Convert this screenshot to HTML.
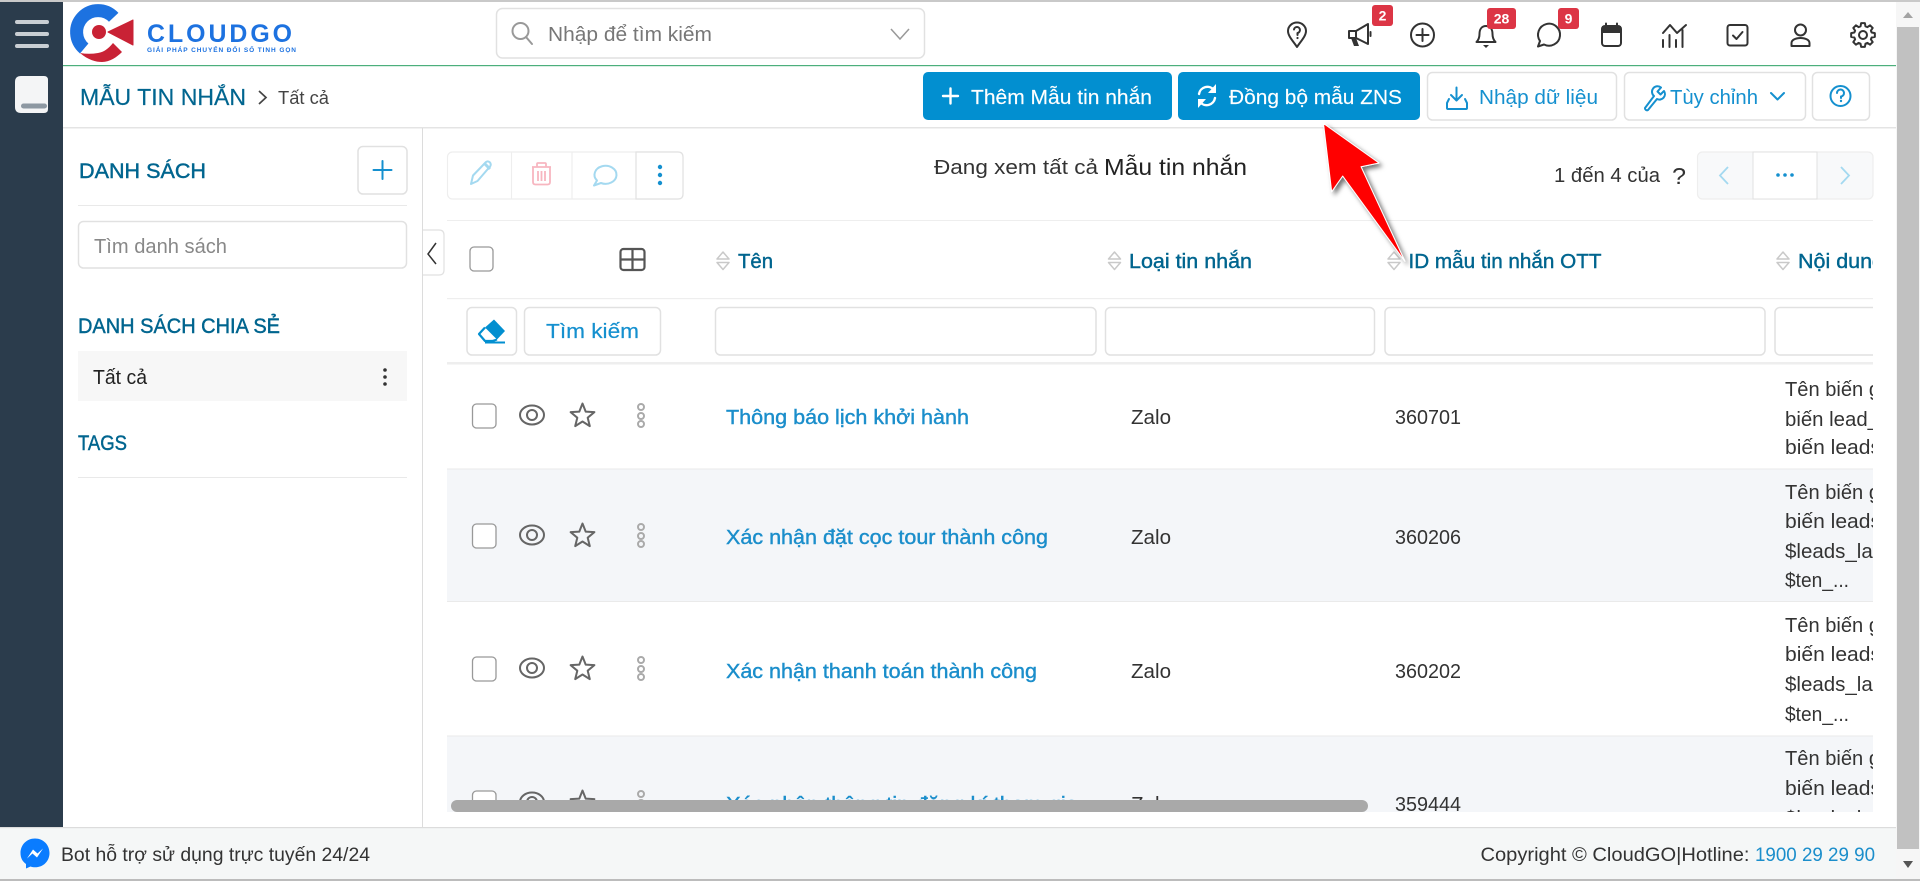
<!DOCTYPE html>
<html lang="vi"><head><meta charset="utf-8"><title>Mẫu tin nhắn</title>
<style>
html,body{margin:0;padding:0;background:#fff;overflow:hidden;width:1920px;height:881px}
svg{display:block}
text{font-family:"Liberation Sans","Noto Sans CJK SC",sans-serif;font-size:20px;fill:#333;white-space:pre}
.h{fill:#00658f;stroke:#00658f;stroke-width:.45;font-size:21px}
.th{fill:#00658f;stroke:#00658f;stroke-width:.4;font-size:20px}
.l{fill:#1b8ecb;stroke:#1b8ecb;stroke-width:.4;font-size:20px}
.b{fill:#1590cf}
.w{fill:#fff;stroke:#fff;stroke-width:.15}
.box{fill:#fff;stroke:#e1e1e1;stroke-width:1.5}
.ic{fill:none;stroke:#333;stroke-width:2;stroke-linecap:round;stroke-linejoin:round}
.bi{fill:none;stroke:#1590cf;stroke-width:2;stroke-linecap:round;stroke-linejoin:round}
.wi{fill:none;stroke:#fff;stroke-width:2.4;stroke-linecap:round;stroke-linejoin:round}
.gi{fill:none;stroke:#666;stroke-width:2;stroke-linejoin:round}
.badge{fill:#fff;font-weight:bold;font-size:14px;text-anchor:middle}
</style></head><body>
<svg width="1920" height="881" viewBox="0 0 1920 881" xmlns="http://www.w3.org/2000/svg">
<defs>
<clipPath id="tbl"><rect x="447" y="220" width="1426" height="592"/></clipPath>
<filter id="sh" x="-30%" y="-30%" width="170%" height="170%"><feDropShadow dx="3" dy="3" stdDeviation="2.5" flood-color="#000" flood-opacity=".55"/></filter>
<g id="rowic">
<rect x="472.5" y="-12" width="23.5" height="24" rx="4" fill="#fff" stroke="#999" stroke-width="1.3"/>
<ellipse cx="532" cy="-1" rx="12" ry="9.5" class="gi"/><circle cx="532" cy="-1" r="5" class="gi"/>
<polygon transform="translate(582.5,0)" class="gi" points="0,-12.5 3.2,-4.4 11.9,-3.9 5.2,1.7 7.3,10.1 0,5.5 -7.3,10.1 -5.2,1.7 -11.9,-3.9 -3.2,-4.4"/>
<g fill="none" stroke="#aaa" stroke-width="2"><circle cx="641" cy="-9" r="3"/><circle cx="641" cy="0" r="3"/><circle cx="641" cy="8" r="3"/></g>
</g>
<g id="sort" fill="none" stroke="#c9c9c9" stroke-width="1.5" stroke-linejoin="round"><path d="M-6 -2 L0 -9 L6 -2 Z"/><path d="M-6 1.5 L0 8.5 L6 1.5 Z"/></g>
</defs>

<!-- page frame -->
<rect x="0" y="0" width="1920" height="881" fill="#fff"/>
<rect x="0" y="0" width="1920" height="2" fill="#c9c9c9"/>
<rect x="0" y="2" width="63" height="825" fill="#2b3c4c"/>

<!-- scrollbar -->
<rect x="1896" y="2" width="24" height="877" fill="#f6f6f6"/>
<rect x="1897" y="27" width="22" height="822" fill="#c1c1c1"/>
<path d="M1903 18 L1908 12 L1913 18 Z" fill="#a3a3a3"/>
<path d="M1903 861 L1908 868 L1913 861 Z" fill="#555"/>

<!-- sidebar -->
<g fill="#c9ced3"><rect x="15" y="20" width="34" height="4" rx="2"/><rect x="15" y="32" width="34" height="4" rx="2"/><rect x="15" y="44" width="34" height="4" rx="2"/></g>
<path d="M21 76 H44 Q48 76 48 80 V109 Q48 113 44 113 H21 Q15 113 15 107 V82 Q15 76 21 76 Z" fill="#f4f5f6"/>
<rect x="21" y="103.500" width="26" height="5" rx="2.500" fill="#8d98a2"/>

<!-- logo -->
<path d="M113.700 17.300 A21.500 21.500 0 1 0 84.200 48.500" fill="none" stroke="#1d72e0" stroke-width="13"/>
<path d="M80 53 C88 60 96 62 102 62 C110 62 117 57 122 52 L113 43 C108 49 104 52 98 53 C92 54 86 54 80 53 Z" fill="#c92235"/>
<path d="M108 32 L133 20 V45 Z" fill="#c92235" stroke="#c92235" stroke-width="1" stroke-linejoin="round"/>
<circle cx="99" cy="32" r="7" fill="#c92235"/>
<text x="147" y="42" textLength="148" lengthAdjust="spacingAndGlyphs" style="font-weight:bold;font-size:25px;letter-spacing:3px;fill:#1d72e0">CLOUDGO</text>
<text x="147" y="52" textLength="149" style="font-weight:bold;font-size:6.500px;fill:#1d72e0">GIẢI PHÁP CHUYỂN ĐỔI SỐ TINH GỌN</text>

<!-- global search -->
<rect x="496.500" y="8.500" width="428" height="49.500" rx="6" class="box"/>
<circle cx="520.500" cy="31" r="8" fill="none" stroke="#999" stroke-width="2"/><path d="M526 37 L532 44" stroke="#999" stroke-width="2" stroke-linecap="round"/>
<text x="548" y="41" textLength="164" lengthAdjust="spacingAndGlyphs" style="fill:#777">Nhập để tìm kiếm</text>
<path d="M891 29 L900 39 L909 29" fill="none" stroke="#999" stroke-width="1.500"/>

<!-- header icons -->
<path class="ic" d="M1297 47 C1293 41 1288 36 1288 31 A9 8.500 0 0 1 1306 31 C1306 36 1301 41 1297 47 Z"/>
<path class="ic" stroke-width="1.600" d="M1294 29.500 A3 3 0 1 1 1297.500 33 V35"/><circle cx="1297.500" cy="38" r="1.100" fill="#333"/>

<path class="ic" d="M1349 31 H1356 L1368 24 V44 L1356 38 H1349 Z M1356 31 V38"/>
<path d="M1351 38 H1356 L1359 46 H1354 Z" fill="#333"/>
<path class="ic" d="M1370.500 32 V36"/>

<circle class="ic" cx="1422.500" cy="35" r="11.500"/><path class="ic" d="M1416.500 35 H1428.500 M1422.500 29 V41"/>

<path class="ic" d="M1476.500 42 C1478.500 40 1479.500 38 1479.500 34 C1479.500 29 1482 26 1486 26 C1490 26 1492.500 29 1492.500 34 C1492.500 38 1493.500 40 1495.500 42 Z"/>
<path d="M1483 45 H1489 L1486 48 Z" fill="#333"/>

<path class="ic" d="M1538 46.500 L1540 41 A11 11 0 1 1 1544 44.500 Z"/>

<rect class="ic" x="1602" y="26" width="19" height="20" rx="3"/>
<rect x="1602" y="26" width="19" height="7" fill="#333"/>
<path class="ic" d="M1606 23.500 V27 M1617 23.500 V27"/>

<path class="ic" d="M1663 40 V47 M1669.500 35 V47 M1676 40 V47 M1682.500 30 V47" stroke-width="1.800"/>
<path class="ic" d="M1663 33 L1670 25 L1677 33 L1686 25" stroke-width="1.800"/>

<rect class="ic" x="1727.500" y="25" width="20" height="20.500" rx="2.500"/>
<path class="ic" d="M1733 35.500 L1736.500 39 L1742.500 32" stroke-width="1.800"/>

<circle class="ic" cx="1800.500" cy="30" r="5.500"/>
<path class="ic" d="M1791.500 46 V43 C1791.500 40 1795.500 38 1800.500 38 C1805.500 38 1809.500 40 1809.500 43 V46 Z"/>

<g transform="translate(1863,35)"><polygon class="ic" points="8.65,-2.48 11.85,-1.88 11.85,1.88 8.65,2.48 7.87,4.36 9.71,7.05 7.05,9.71 4.36,7.87 2.48,8.65 1.88,11.85 -1.88,11.85 -2.48,8.65 -4.36,7.87 -7.05,9.71 -9.71,7.05 -7.87,4.36 -8.65,2.48 -11.85,1.88 -11.85,-1.88 -8.65,-2.48 -7.87,-4.36 -9.71,-7.05 -7.05,-9.71 -4.36,-7.87 -2.48,-8.65 -1.88,-11.85 1.88,-11.85 2.48,-8.65 4.36,-7.87 7.05,-9.71 9.71,-7.05 7.87,-4.36"/><circle class="ic" r="4"/></g>

<rect x="1372" y="5" width="21" height="21" rx="3" fill="#dc3545"/><text class="badge" x="1382.500" y="20.500">2</text>
<rect x="1487" y="8" width="29" height="21" rx="3" fill="#dc3545"/><text class="badge" x="1501.500" y="23.500">28</text>
<rect x="1558" y="8" width="21" height="21" rx="3" fill="#dc3545"/><text class="badge" x="1568.500" y="23.500">9</text>

<rect x="63" y="65" width="1833" height="1.200" fill="#4caf7c"/>

<!-- breadcrumb bar -->
<text x="80" y="105" textLength="166" lengthAdjust="spacingAndGlyphs" style="font-size:23px;fill:#00658f;stroke:#00658f;stroke-width:.2">MẪU TIN NHẮN</text>
<path d="M259 91 L266 97.500 L259 104" fill="none" stroke="#444" stroke-width="1.700"/>
<text x="278" y="104" textLength="51" lengthAdjust="spacingAndGlyphs" style="font-size:18px;fill:#444">Tất cả</text>

<rect x="923" y="72" width="249" height="48" rx="5" fill="#028fd0"/>
<path class="wi" d="M943 96 H958 M950.500 88.500 V103.500"/>
<text class="w" x="971" y="104" textLength="181" lengthAdjust="spacingAndGlyphs">Thêm Mẫu tin nhắn</text>

<rect x="1178" y="72" width="242" height="48" rx="5" fill="#028fd0"/>
<path class="wi" d="M1199 94 A8.500 8.500 0 0 1 1214 90 M1215 98 A8.500 8.500 0 0 1 1200 102"/>
<path d="M1216 84 V93 H1208 Z M1198 108 V99 H1206 Z" fill="#fff"/>
<text class="w" x="1229" y="104" textLength="173" lengthAdjust="spacingAndGlyphs">Đồng bộ mẫu ZNS</text>

<rect x="1427.500" y="72.500" width="189" height="47.500" rx="5" class="box"/>
<path class="bi" d="M1456.500 87.500 V100 M1451 95 L1456.500 100.500 L1462 95 M1449 99 L1447 103 V108 Q1447 109 1448 109 H1466 Q1467 109 1467 108 V103 L1465 99"/>
<text class="b" x="1479" y="104" textLength="119" lengthAdjust="spacingAndGlyphs">Nhập dữ liệu</text>

<rect x="1624.500" y="72.500" width="181" height="47.500" rx="5" class="box"/>
<path class="bi" d="M1645 108 L1654 96 A5.500 5.500 0 0 1 1661 87.500 L1657.500 91.500 L1660.500 94.500 L1664 91 A5.500 5.500 0 0 1 1657 99 L1648 110 A2 2 0 0 1 1645 108 Z"/>
<text class="b" x="1670" y="104" textLength="88" lengthAdjust="spacingAndGlyphs">Tùy chỉnh</text>
<path class="bi" d="M1771 93 L1777.500 99.500 L1784 93"/>

<rect x="1812.500" y="72.500" width="57" height="47.500" rx="5" class="box"/>
<circle class="bi" cx="1840.500" cy="96" r="10"/>
<path class="bi" d="M1837 93 A3.500 3.500 0 1 1 1841 96.500 V98"/><circle cx="1841" cy="101" r="1.200" fill="#1590cf"/>

<rect x="63" y="127" width="1833" height="1.500" fill="#e4e4e4"/>
<rect x="422" y="128" width="1" height="699" fill="#dcdcdc"/>

<!-- left panel -->
<text class="h" x="79" y="178" textLength="127" lengthAdjust="spacingAndGlyphs">DANH SÁCH</text>
<rect x="358" y="146.500" width="49" height="47.500" rx="5" class="box"/>
<path d="M382.500 161 V179 M373.500 170 H391.500" stroke="#1590cf" stroke-width="2" stroke-linecap="round"/>
<rect x="78" y="205" width="329" height="1" fill="#e9e9e9"/>
<rect x="78.500" y="221.500" width="328" height="46.500" rx="5" class="box"/>
<text x="94" y="253" textLength="133" lengthAdjust="spacingAndGlyphs" style="fill:#888">Tìm danh sách</text>
<text class="h" x="78" y="333" textLength="202" lengthAdjust="spacingAndGlyphs">DANH SÁCH CHIA SẺ</text>
<rect x="78" y="351" width="329" height="50" fill="#f7f7f7"/>
<text x="93" y="384" textLength="54" lengthAdjust="spacingAndGlyphs" style="fill:#222">Tất cả</text>
<g fill="#333"><circle cx="385" cy="370" r="1.800"/><circle cx="385" cy="377" r="1.800"/><circle cx="385" cy="384" r="1.800"/></g>
<text class="h" x="78" y="450" textLength="49" lengthAdjust="spacingAndGlyphs">TAGS</text>
<rect x="78" y="477" width="329" height="1" fill="#e9e9e9"/>

<!-- collapse tab -->
<path d="M423 230 H439 Q444 230 444 235 V270 Q444 275 439 275 H423" fill="#fff" stroke="#e1e1e1" stroke-width="1.200"/>
<path d="M436 243 L428 254 L436 264" fill="none" stroke="#333" stroke-width="1.500"/>

<!-- toolbar -->
<rect x="447.500" y="152" width="235.500" height="47" rx="5" fill="#fff" stroke="#eee" stroke-width="1.200"/>
<path d="M511.500 152 V199 M572 152 V199" stroke="#eee" stroke-width="1.200"/>
<path d="M636 152 H678 Q683 152 683 157 V194 Q683 199 678 199 H636 Z" fill="#fff" stroke="#e1e1e1" stroke-width="1.200"/>
<path d="M471 184 L473 175.500 L486 162 Q488 160.500 490 162.500 Q491.500 164.500 490 166.500 L477.500 181 Z" fill="none" stroke="#a4d9f0" stroke-width="2" stroke-linejoin="round"/>
<path d="M484 163 L490 169" stroke="#a4d9f0" stroke-width="3"/>
<path d="M533 167 V182 Q533 184.500 535.500 184.500 H547.500 Q550 184.500 550 182 V167 M532 167 H551 M537 167 V164 Q537 163 538 163 H545 Q546 163 546 164 V167 M538 171 V181 M541.500 171 V181 M545 171 V181" fill="none" stroke="#f7b6c0" stroke-width="1.800"/>
<path d="M594 185.500 L597 180.500 A11 9 0 1 1 601 183 Z" fill="none" stroke="#a4d9f0" stroke-width="2" stroke-linejoin="round"/>
<g fill="#1590cf"><circle cx="660" cy="167" r="2.200"/><circle cx="660" cy="175" r="2.200"/><circle cx="660" cy="183" r="2.200"/></g>

<text x="934" y="174" textLength="164" lengthAdjust="spacingAndGlyphs">Đang xem tất cả</text>
<text x="1104" y="175" textLength="143" lengthAdjust="spacingAndGlyphs" style="font-size:23px;fill:#222">Mẫu tin nhắn</text>

<text x="1554" y="182" textLength="106" lengthAdjust="spacingAndGlyphs">1 đến 4 của</text>
<text x="1672" y="184" textLength="14" lengthAdjust="spacingAndGlyphs" style="font-size:23px">?</text>
<rect x="1697.500" y="152" width="175.500" height="47" rx="5" fill="#f8f9fa" stroke="#eee" stroke-width="1.200"/>
<rect x="1753" y="152" width="64" height="47" fill="#fff" stroke="#e1e1e1" stroke-width="1"/>
<path d="M1728 167 L1720 175.500 L1728 184" fill="none" stroke="#a4d9f0" stroke-width="1.800"/>
<path d="M1841 167 L1849 175.500 L1841 184" fill="none" stroke="#a4d9f0" stroke-width="1.800"/>
<g fill="#1590cf"><circle cx="1778" cy="175" r="1.800"/><circle cx="1785" cy="175" r="1.800"/><circle cx="1792" cy="175" r="1.800"/></g>

<rect x="447" y="220" width="1426" height="1" fill="#eee"/>

<!-- table -->
<g clip-path="url(#tbl)">
<rect x="447" y="469" width="1426" height="133" fill="#f4f6f9"/>
<rect x="447" y="736" width="1426" height="76" fill="#f4f6f9"/>
<rect x="447" y="298" width="1426" height="1.200" fill="#eee"/>
<rect x="447" y="362" width="1426" height="2.500" fill="#eee"/>
<rect x="447" y="468.500" width="1426" height="1" fill="#eaeaea"/>
<rect x="447" y="601" width="1426" height="1" fill="#eaeaea"/>
<rect x="447" y="735.500" width="1426" height="1" fill="#eaeaea"/>

<rect x="470" y="247" width="23" height="24" rx="4" fill="#fff" stroke="#999" stroke-width="1.300"/>
<rect x="620.500" y="249" width="24" height="21" rx="3" fill="none" stroke="#555" stroke-width="2.200"/>
<path d="M620.500 259.500 H644.500 M632.500 249 V270" stroke="#555" stroke-width="2.200"/>

<use href="#sort" x="723" y="261"/><text class="th" x="738" y="268" textLength="35" lengthAdjust="spacingAndGlyphs">Tên</text>
<use href="#sort" x="1114.500" y="261"/><text class="th" x="1129" y="268" textLength="123" lengthAdjust="spacingAndGlyphs">Loại tin nhắn</text>
<use href="#sort" x="1394" y="261"/><text class="th" x="1408.500" y="268" textLength="193" lengthAdjust="spacingAndGlyphs">ID mẫu tin nhắn OTT</text>
<use href="#sort" x="1783" y="261"/><text class="th" x="1798" y="268" textLength="86" lengthAdjust="spacingAndGlyphs">Nội dung</text>

<rect x="467" y="307.500" width="49.500" height="47.500" rx="5" class="box"/>
<path d="M494 319.500 L505 331 L497 339.500 L485 327.500 Z" fill="#028fd0"/>
<path d="M485 327.500 L479 334 L485 341 H492.500 L497 339.500" fill="none" stroke="#028fd0" stroke-width="2.200" stroke-linejoin="round"/>
<path d="M485 342.500 H505" stroke="#028fd0" stroke-width="2"/>
<rect x="524.500" y="307.500" width="136" height="47.500" rx="5" class="box"/>
<text x="546" y="338" textLength="93" lengthAdjust="spacingAndGlyphs" style="fill:#1590cf;stroke:#1590cf;stroke-width:.2">Tìm kiếm</text>
<rect x="715.500" y="307.500" width="380.500" height="47.500" rx="5" class="box"/>
<rect x="1105.500" y="307.500" width="269" height="47.500" rx="5" class="box"/>
<rect x="1385" y="307.500" width="380" height="47.500" rx="5" class="box"/>
<rect x="1775" y="307.500" width="200" height="47.500" rx="5" class="box"/>

<use href="#rowic" y="416"/>
<text class="l" x="726" y="424" textLength="243" lengthAdjust="spacingAndGlyphs">Thông báo lịch khởi hành</text>
<text x="1131" y="424" textLength="40" lengthAdjust="spacingAndGlyphs">Zalo</text>
<text x="1395" y="424" textLength="66" lengthAdjust="spacingAndGlyphs">360701</text>
<text x="1785" y="396" textLength="95" lengthAdjust="spacingAndGlyphs">Tên biến g</text>
<text x="1785" y="426" textLength="94" lengthAdjust="spacingAndGlyphs">biến lead_</text>
<text x="1785" y="454" textLength="96" lengthAdjust="spacingAndGlyphs">biến leads</text>

<use href="#rowic" y="536"/>
<text class="l" x="726" y="544" textLength="322" lengthAdjust="spacingAndGlyphs">Xác nhận đặt cọc tour thành công</text>
<text x="1131" y="544" textLength="40" lengthAdjust="spacingAndGlyphs">Zalo</text>
<text x="1395" y="544" textLength="66" lengthAdjust="spacingAndGlyphs">360206</text>
<text x="1785" y="499" textLength="95" lengthAdjust="spacingAndGlyphs">Tên biến g</text>
<text x="1785" y="528" textLength="96" lengthAdjust="spacingAndGlyphs">biến leads</text>
<text x="1785" y="558" textLength="98" lengthAdjust="spacingAndGlyphs">$leads_las</text>
<text x="1785" y="587" textLength="64" lengthAdjust="spacingAndGlyphs">$ten_...</text>

<use href="#rowic" y="669"/>
<text class="l" x="726" y="678" textLength="311" lengthAdjust="spacingAndGlyphs">Xác nhận thanh toán thành công</text>
<text x="1131" y="678" textLength="40" lengthAdjust="spacingAndGlyphs">Zalo</text>
<text x="1395" y="678" textLength="66" lengthAdjust="spacingAndGlyphs">360202</text>
<text x="1785" y="632" textLength="95" lengthAdjust="spacingAndGlyphs">Tên biến g</text>
<text x="1785" y="661" textLength="96" lengthAdjust="spacingAndGlyphs">biến leads</text>
<text x="1785" y="691" textLength="98" lengthAdjust="spacingAndGlyphs">$leads_las</text>
<text x="1785" y="721" textLength="64" lengthAdjust="spacingAndGlyphs">$ten_...</text>

<use href="#rowic" y="803"/>
<text class="l" x="726" y="811" textLength="352" lengthAdjust="spacingAndGlyphs">Xác nhận thông tin đăng kí tham gia</text>
<text x="1131" y="811" textLength="40" lengthAdjust="spacingAndGlyphs">Zalo</text>
<text x="1395" y="811" textLength="66" lengthAdjust="spacingAndGlyphs">359444</text>
<text x="1785" y="765" textLength="95" lengthAdjust="spacingAndGlyphs">Tên biến g</text>
<text x="1785" y="795" textLength="96" lengthAdjust="spacingAndGlyphs">biến leads</text>
<text x="1785" y="825" textLength="98" lengthAdjust="spacingAndGlyphs">$leads_las</text>
</g>
<rect x="451" y="800" width="917" height="12" rx="6" fill="#a9a9a9"/>

<!-- footer -->
<rect x="0" y="827" width="1896" height="52" fill="#f5f7f7"/>
<rect x="0" y="827" width="1896" height="1.200" fill="#dcdcdc"/>
<rect x="0" y="879" width="1920" height="2" fill="#bcbcbc"/>
<path d="M35 838.500 C26.500 838.500 20.500 845 20.500 853 C20.500 858 22.500 861.500 26 864 V868.500 L30.500 866.500 C32 867 33.500 867.300 35 867.300 C43.500 867.300 49.500 861 49.500 853 C49.500 845 43.500 838.500 35 838.500 Z" fill="#0a7cff"/>
<path d="M27 858.500 L33 849.500 L37.500 853.500 L43 848.500 L37 857.500 L32.500 853.500 Z" fill="#fff"/>
<text x="61" y="861" textLength="309" lengthAdjust="spacingAndGlyphs" style="font-size:19.500px">Bot hỗ trợ sử dụng trực tuyến 24/24</text>
<text x="1480.500" y="861" textLength="269" lengthAdjust="spacingAndGlyphs" style="font-size:19.500px">Copyright © CloudGO|Hotline:</text>
<text x="1755" y="861" textLength="120" lengthAdjust="spacingAndGlyphs" style="font-size:19.500px;fill:#1b8ecb">1900 29 29 90</text>

<!-- annotation arrow -->
<polygon points="1323.500,123.500 1379,163 1361,166.700 1405,261.500 1342.700,176 1331.700,191.700" fill="#f00" stroke="#fff" stroke-width="1" stroke-linejoin="round" filter="url(#sh)"/>
</svg>
</body></html>
